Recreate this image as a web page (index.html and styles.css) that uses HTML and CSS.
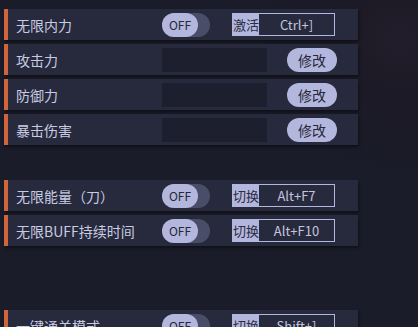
FILE: index.html
```html
<!DOCTYPE html>
<html lang="zh-CN">

<head>
    <meta charset="UTF-8">
    <meta name="viewport" content="width=device-width, initial-scale=1.0">
    <title>修改器</title>
    <link rel="stylesheet" href="styles.css">
</head>

<body>
    <main class="list">
        <div class="row">
            <span class="label">无限内力</span>
            <div class="toggle"><span class="knob">OFF</span></div>
            <div class="hotkey"><span class="tag">激活</span><span class="keys">Ctrl+]</span></div>
        </div>
        <div class="row">
            <span class="label">攻击力</span>
            <div class="field"></div>
            <button type="button" class="edit">修改</button>
        </div>
        <div class="row">
            <span class="label">防御力</span>
            <div class="field"></div>
            <button type="button" class="edit">修改</button>
        </div>
        <div class="row">
            <span class="label">暴击伤害</span>
            <div class="field"></div>
            <button type="button" class="edit">修改</button>
        </div>

        <div class="spacer"></div>

        <div class="row">
            <span class="label">无限能量（刀）</span>
            <div class="toggle"><span class="knob">OFF</span></div>
            <div class="hotkey"><span class="tag">切换</span><span class="keys">Alt+F7</span></div>
        </div>
        <div class="row">
            <span class="label">无限BUFF持续时间</span>
            <div class="toggle"><span class="knob">OFF</span></div>
            <div class="hotkey"><span class="tag">切换</span><span class="keys">Alt+F10</span></div>
        </div>

        <div class="spacer tall"></div>

        <div class="row">
            <span class="label">一键通关模式</span>
            <div class="toggle"><span class="knob">OFF</span></div>
            <div class="hotkey"><span class="tag">切换</span><span class="keys">Shift+]</span></div>
        </div>
    </main>
</body>

</html>
```

FILE: styles.css
```css
html,
body {
    margin: 0;
    height: 100%;
}

body {
    background-color: #1a1c29;
    background-image: radial-gradient(circle at 400px 40px, #221d2a 0, #1c1a26 60px, rgba(26, 28, 41, 0) 140px);
    font-family: "Noto Sans CJK SC", "Noto Sans", sans-serif;
    overflow: hidden;
}

.list {
    padding: 9px 0 0 4px;
    display: flex;
    flex-flow: column;
    gap: 4px;
}

.row {
    width: 350px;
    height: 31px;
    display: flex;
    align-items: center;
    background-color: #272a3d;
    border-left: 4px solid #d0653c;
    box-shadow: 1px 2px 3px rgba(0, 0, 0, 0.45);
    flex-shrink: 0;
}

.label {
    width: 146px;
    padding-left: 8px;
    font-size: 14px;
    color: #c9cbe2;
    white-space: nowrap;
}

.toggle {
    width: 48px;
    height: 24px;
    border-radius: 12px;
    background-color: #4a4d67;
}

.knob {
    display: flex;
    width: 36px;
    height: 24px;
    border-radius: 12px;
    background-color: #b4b7dd;
    color: #262838;
    font-size: 12px;
    justify-content: center;
    align-items: center;
}

.hotkey {
    margin-left: 22px;
    width: 103px;
    height: 23px;
    display: flex;
    box-sizing: border-box;
    border: 1px solid #b4b7dd;
}

.tag {
    width: 26px;
    background-color: #b4b7dd;
    color: #2a2c42;
    font-size: 13px;
    line-height: 21px;
    text-align: center;
}

.keys {
    flex: 1;
    color: #c3c5df;
    font-size: 13px;
    line-height: 21px;
    text-align: center;
}

.field {
    width: 105px;
    height: 24px;
    background-color: #1d1f2f;
}

.edit {
    margin-left: 20px;
    width: 50px;
    height: 24px;
    border: none;
    border-radius: 12px;
    background-color: #b4b7dd;
    color: #262838;
    font-family: inherit;
    font-size: 14px;
    padding: 0;
}

.spacer {
    height: 27px;
    flex-shrink: 0;
}

.tall {
    height: 56px;
}
```
